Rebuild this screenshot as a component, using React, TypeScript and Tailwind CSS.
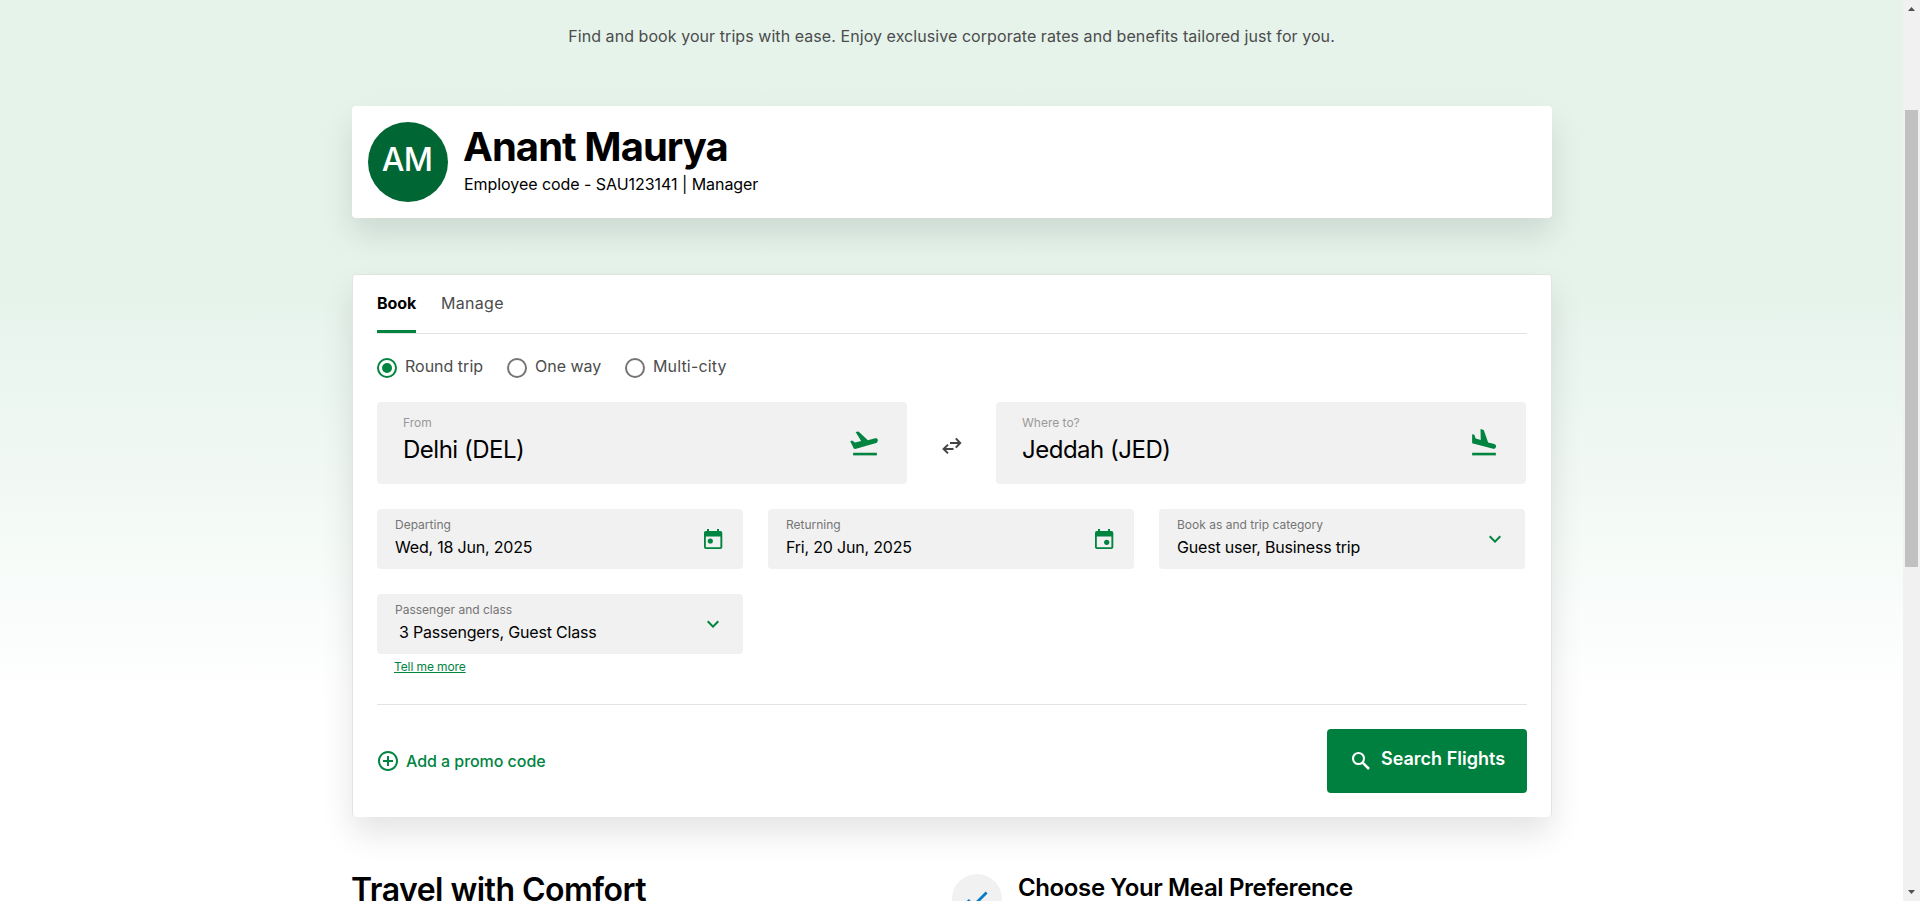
import type { ReactNode } from "react";
import { MdAddCircleOutline, MdExpandMore } from "react-icons/md";

function Radio({ label, checked, className }: { label: string; checked?: boolean; className?: string }) {
  return (
    <label className={`flex items-center ${className ?? ""}`}>
      <span
        className={`flex size-5 items-center justify-center rounded-full border-2 ${
          checked ? "border-[#00843f]" : "border-[#757575]"
        }`}
      >
        {checked && <span className="size-2.5 rounded-full bg-[#00843f]" />}
      </span>
      <span className="-mt-1 ml-2 leading-5 whitespace-nowrap text-[#4c4c4c]">{label}</span>
    </label>
  );
}

function TakeoffIcon() {
  return (
    <svg viewBox="0 0 24 24" className="size-[30px] overflow-visible" fill="currentColor">
      <path d="M2.5 19h19v2.1h-19z" />
      <path d="M4.5 2.3 6.8 1.9 14.3 9 20.2 7.4C21.2 7.2 22 7.7 22.2 8.6 22.4 9.7 21.9 10.8 20.9 11.1L4.2 15.9 3 15.6 0.2 9.7 1.7 9.1 4 10.8 8.9 9.5z" />
    </svg>
  );
}

function LandingIcon() {
  return (
    <svg viewBox="0 0 24 24" className="size-[30px] overflow-visible" fill="currentColor">
      <path d="M2.5 19h19v2.1h-19z" />
      <path d="M9.2 0 11.8 0.8 15.3 10.7 20.2 12C21.2 12.3 21.8 13.1 21.6 14.1 21.4 15.3 20.4 16 19.3 15.7L2.5 11.3V4.1L4.3 4.5 5.3 7.5 9.4 8.7z" />
    </svg>
  );
}

function SearchIcon() {
  return (
    <svg viewBox="0 0 24 24" className="size-6" fill="none" stroke="currentColor">
      <circle cx="9.5" cy="9.5" r="5.5" strokeWidth="2.1" />
      <path d="m13.6 13.6 6.4 6.4" strokeWidth="2.5" />
    </svg>
  );
}

function CheckIcon() {
  return (
    <svg viewBox="0 0 28 28" className="size-7" fill="none" stroke="#0a7cc4" strokeWidth="2.8">
      <path d="M4.8 14.9 10.5 20.6 23.6 7.5" />
    </svg>
  );
}

function AirportField({ label, value, icon }: { label: string; value: string; icon: ReactNode }) {
  return (
    <div className="flex h-[82px] w-[530px] justify-between rounded bg-[#f1f1f1] pt-[13px] pr-[27px] pl-[26px]">
      <div>
        <div className="text-xs leading-4 text-[#999]">{label}</div>
        <div className="mt-[3px] text-2xl leading-8 tracking-[-0.5px] text-black">{value}</div>
      </div>
      <div className="mt-3.5 text-[#00843f]">{icon}</div>
    </div>
  );
}

function Field({ label, value, icon }: { label: string; value: ReactNode; icon: ReactNode }) {
  return (
    <div className="flex h-[60px] items-center justify-between rounded bg-[#f1f1f1] pr-[18px] pl-[18px]">
      <div className="h-full pt-2">
        <div className="text-xs leading-4 text-[#757575]">{label}</div>
        <div className="mt-0.5 leading-6 tracking-[-0.19px] text-black">{value}</div>
      </div>
      <div className="text-2xl text-[#00843f]">{icon}</div>
    </div>
  );
}

function Calendar({ cx, cy }: { cx: number; cy: number }) {
  return (
    <svg viewBox="0 0 24 24" className="mt-0.5 size-6" fill="currentColor">
      <path d="M19.4 3H18V1h-2v2H8V1H6v2H4.8A1.9 1.9 0 0 0 3 5v14.2A1.9 1.9 0 0 0 4.8 21h14.6a1.9 1.9 0 0 0 1.9-1.8V5a1.9 1.9 0 0 0-1.9-2zm0 16.2H4.8V8.6h14.6z" />
      <circle cx={cx} cy={cy} r="2.6" />
    </svg>
  );
}

function SwapArrows() {
  return (
    <svg viewBox="0 0 20 18" className="h-[18px] w-5" fill="none" stroke="#444" strokeWidth="2">
      <path d="M8 6h10M13.8 1.4 18.2 6l-4.4 4.6M11.5 12H2M6 7.6 1.6 12 6 16.4" />
    </svg>
  );
}

function Scrollbar() {
  return (
    <div className="flex h-full w-[17px] flex-col items-center bg-[#f1f1f1]">
      <svg viewBox="0 0 7 4" className="mt-[7px] h-1 w-[7px]" fill="#505050">
        <path d="M0 4 3.5 0 7 4z" />
      </svg>
      <div className="mt-[99px] h-[457px] w-[13px] bg-[#c1c1c1]" />
      <svg viewBox="0 0 7 4" className="mt-auto mb-[7px] h-1 w-[7px]" fill="#505050">
        <path d="M0 0 3.5 4 7 0z" />
      </svg>
    </div>
  );
}

export default function App() {
  return (
    <div className="flex h-[901px] w-[1920px] overflow-hidden bg-white font-['Inter',sans-serif] text-base text-black">
      <main className="h-full w-[1903px] overflow-hidden bg-linear-to-b from-[#e5f3eb] from-[280px] to-white to-[700px] pt-6 pl-[352px]">
        <p className="w-[1199px] text-center leading-6 tracking-[0.065px] text-[#4c4c4c]">
          Find and book your trips with ease. Enjoy exclusive corporate rates and benefits tailored just for you.
        </p>

        <section className="mt-[58px] flex h-28 w-[1200px] gap-4 rounded bg-white p-4 shadow-[0_16px_32px_rgba(0,0,0,0.11)]">
          <div className="flex size-20 items-center justify-center rounded-full bg-[#006633] pr-0.5 pb-[5px] text-[32px] font-medium tracking-[-0.6px] text-white">
            AM
          </div>
          <div>
            <h1 className="-ml-px pt-px text-[40px] leading-[48px] font-bold tracking-[-0.95px]">Anant Maurya</h1>
            <p className="mt-px leading-6 tracking-[-0.05px]">Employee code - SAU123141 | Manager</p>
          </div>
        </section>

        <section className="mt-14 h-[543px] w-[1200px] rounded border border-b-0 border-[#e3e3e3] bg-white px-6 shadow-[0_16px_32px_rgba(0,0,0,0.11)]">
          <nav className="flex h-[59px] gap-[25px] border-b border-[#e3e3e3]">
            <div className="w-[39px] border-b-[3px] border-[#00843f] pt-4 leading-6 font-bold tracking-[-0.1px]">
              Book
            </div>
            <div className="pt-4 leading-6 tracking-[0.3px] text-[#4c4c4c]">Manage</div>
          </nav>

          <div className="mt-6 flex h-5">
            <Radio label="Round trip" checked className="w-[130px]" />
            <Radio label="One way" className="w-[118px]" />
            <Radio label="Multi-city" className="tracking-[0.15px]" />
          </div>

          <div className="mt-6 flex">
            <AirportField label="From" value="Delhi (DEL)" icon={<TakeoffIcon />} />
            <div className="flex w-[89px] items-center justify-center pt-1.5">
              <SwapArrows />
            </div>
            <AirportField label="Where to?" value="Jeddah (JED)" icon={<LandingIcon />} />
          </div>

          <div className="mt-[25px] grid grid-cols-[366px_366px_366px] gap-[25px]">
            <Field label="Departing" value="Wed, 18 Jun, 2025" icon={<Calendar cx={9.3} cy={13} />} />
            <Field label="Returning" value="Fri, 20 Jun, 2025" icon={<Calendar cx={14.7} cy={14.3} />} />
            <Field label="Book as and trip category" value="Guest user, Business trip" icon={<MdExpandMore />} />
            <Field
              label="Passenger and class"
              value={<span className="pl-1">3 Passengers, Guest Class</span>}
              icon={<MdExpandMore />}
            />
          </div>
          <div className="mt-[5px] pl-[17px] text-xs leading-4 tracking-[-0.1px] text-[#00843f] underline">
            Tell me more
          </div>

          <div className="mt-[29px] flex justify-between border-t border-[#e3e3e3] pt-6">
            <button className="-ml-px flex items-center gap-1.5 font-medium tracking-[-0.05px] text-[#00843f]">
              <MdAddCircleOutline className="text-2xl" />
              Add a promo code
            </button>
            <button className="flex h-16 w-[200px] items-center rounded bg-[#00803e] pl-[22px] text-lg font-semibold text-white">
              <SearchIcon />
              <span className="-mt-[5px] ml-2 whitespace-nowrap">Search Flights</span>
            </button>
          </div>
        </section>

        <section className="mt-[55px] flex">
          <h2 className="w-[600px] -ml-px pt-px text-[32px] leading-[34px] font-semibold tracking-[-0.53px]">
            Travel with Comfort
          </h2>
          <div className="mt-0.5 ml-px flex size-[50px] shrink-0 items-center justify-center rounded-full bg-[#f1f1f1]">
            <CheckIcon />
          </div>
          <h3 className="ml-4 pt-px text-2xl leading-[30px] font-semibold tracking-[-0.38px]">
            Choose Your Meal Preference
          </h3>
        </section>
      </main>
      <Scrollbar />
    </div>
  );
}
